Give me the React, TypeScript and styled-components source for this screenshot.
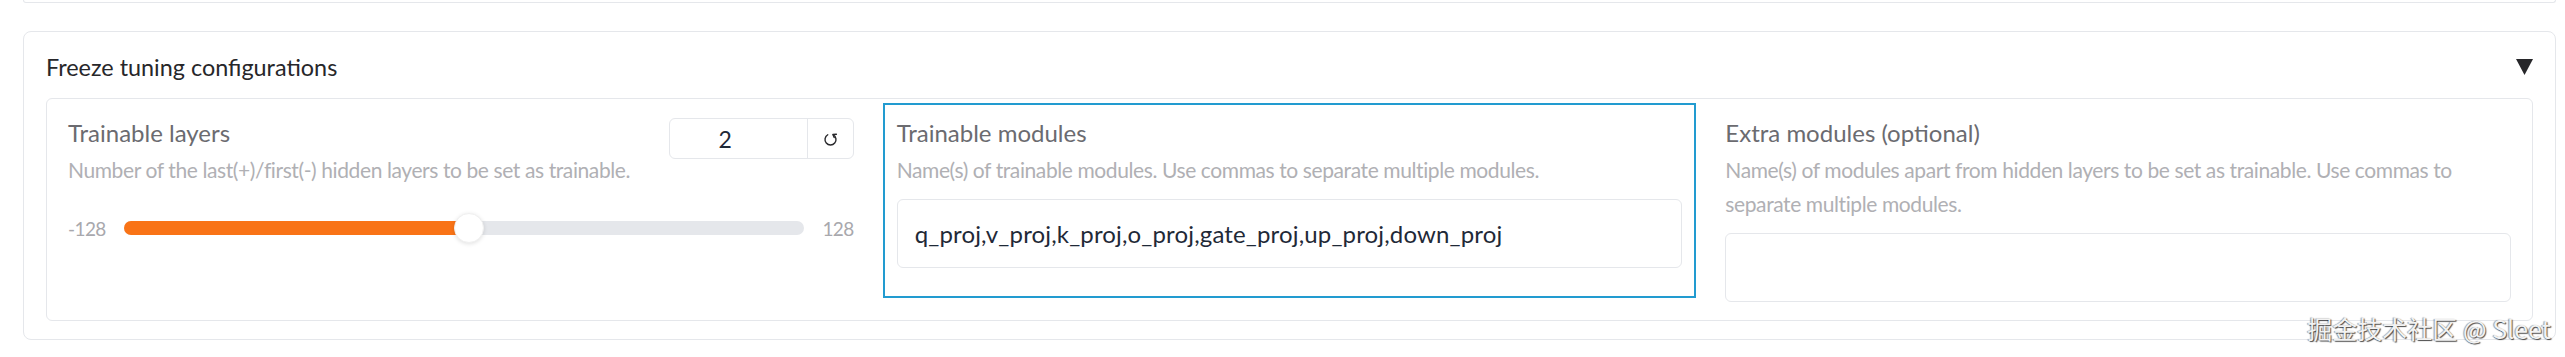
import React from "react";
import styled, { createGlobalStyle } from "styled-components";

const GlobalStyle = createGlobalStyle`
  html, body {
    margin: 0;
    padding: 0;
    background: #ffffff;
  }
  body {
    font-family: Lato, "Noto Sans", sans-serif;
  }
  * {
    box-sizing: border-box;
  }
`;

const SLIDER_MIN = -128;
const SLIDER_MAX = 128;
const SLIDER_VALUE = 2;

const App = () => {
  const pct = ((SLIDER_VALUE - SLIDER_MIN) / (SLIDER_MAX - SLIDER_MIN)) * 100;

  return (
    <>
      <GlobalStyle />
      <Page>
        <PrevPanel />
        <Accordion>
          <Header>
            <Title>Freeze tuning configurations</Title>
            <svg width="17" height="16" viewBox="0 0 17 16">
              <polygon points="0,0 17,0 8.5,16" fill="#27272a" />
            </svg>
          </Header>
          <Group>
            <Block>
              <BlockHead>
                <div>
                  <Label>Trainable layers</Label>
                  <Info>Number of the last(+)/first(-) hidden layers to be set as trainable.</Info>
                </div>
                <NumberField>
                  <NumberValue>{SLIDER_VALUE}</NumberValue>
                  <ResetButton title="↺">
                    <svg width="15" height="15" viewBox="0 0 15 15" fill="none" stroke="#27272a" strokeWidth="1.4" strokeLinecap="round" strokeLinejoin="round">
                      <path d="M4.75 3.74 A5.5 5.5 0 1 0 10.25 3.74" />
                      <path d="M13.4 3.2 L9.9 3.5 L11.2 6.6" />
                    </svg>
                  </ResetButton>
                </NumberField>
              </BlockHead>
              <SliderRow>
                <RangeText>{SLIDER_MIN}</RangeText>
                <Track>
                  <Fill style={{ width: `${pct}%` }} />
                  <Thumb style={{ left: `${pct}%` }} />
                </Track>
                <RangeText>{SLIDER_MAX}</RangeText>
              </SliderRow>
            </Block>

            <Block $focused $padBottom={28}>
              <Label>Trainable modules</Label>
              <Info>Name(s) of trainable modules. Use commas to separate multiple modules.</Info>
              <TextBox>q_proj,v_proj,k_proj,o_proj,gate_proj,up_proj,down_proj</TextBox>
            </Block>

            <Block>
              <Label>Extra modules (optional)</Label>
              <Info>
                Name(s) of modules apart from hidden layers to be set as trainable. Use commas to separate
                multiple modules.
              </Info>
              <TextBox />
            </Block>
          </Group>
        </Accordion>
        <Watermark>掘金技术社区 @ Sleet</Watermark>
      </Page>
    </>
  );
};
export default App;

const Page = styled.div`
  position: relative;
  width: 2565px;
  height: 357px;
  padding: 0 9px 0 23px;
  overflow: hidden;
`;

const PrevPanel = styled.div`
  height: 3px;
  border: 1px solid #e5e7eb;
  border-top: none;
  border-radius: 0 0 6px 6px;
`;

const Accordion = styled.div`
  margin-top: 28px;
  border: 1px solid #e5e7eb;
  border-radius: 8px;
  padding: 17px 22px 18px;
`;

const Header = styled.div`
  display: flex;
  align-items: center;
  justify-content: space-between;
  height: 36px;
  margin-bottom: 13px;
`;

const Title = styled.span`
  font-size: 23.4px;
  line-height: 36px;
  color: #27272a;
`;

const Group = styled.div`
  display: flex;
  align-items: flex-start;
  gap: 15px;
  border: 1px solid #e5e7eb;
  border-radius: 6px;
  padding: 4px 7px;
`;

const Block = styled.div<{ $focused?: boolean; $padBottom?: number }>`
  flex: 1 1 0;
  min-width: 0;
  border: 2px solid ${(p) => (p.$focused ? "#229bd0" : "transparent")};
  padding: 12px 12px ${(p) => p.$padBottom ?? 12}px;
`;

const BlockHead = styled.div`
  display: flex;
  align-items: flex-start;
  justify-content: space-between;
`;

const Label = styled.div`
  font-size: 24px;
  line-height: 32px;
  color: #6b6b70;
  margin-bottom: 4px;
`;

const Info = styled.div`
  font-size: 21px;
  letter-spacing: -0.4px;
  line-height: 34px;
  color: #b0b0b4;
`;

const NumberField = styled.div`
  display: flex;
  width: 185px;
  height: 41px;
  border: 1px solid #e5e7eb;
  border-radius: 6px;
  margin-top: 1px;
`;

const NumberValue = styled.div`
  width: 137px;
  padding-right: 26px;
  display: flex;
  align-items: center;
  justify-content: center;
  font-size: 23px;
  color: #1f2937;
`;

const ResetButton = styled.div`
  flex: 1;
  border-left: 1px solid #e5e7eb;
  display: flex;
  align-items: center;
  justify-content: center;
`;

const SliderRow = styled.div`
  display: flex;
  align-items: center;
  gap: 18px;
  height: 32px;
  margin-top: 25px;
`;

const RangeText = styled.span`
  font-size: 19px;
  letter-spacing: -0.6px;
  color: #a8a8ad;
`;

const Track = styled.div`
  position: relative;
  flex: 1;
  height: 14px;
  border-radius: 7px;
  background: #e5e7eb;
`;

const Fill = styled.div`
  height: 100%;
  border-radius: 7px;
  background: #f97316;
`;

const Thumb = styled.div`
  position: absolute;
  top: 50%;
  width: 30px;
  height: 30px;
  margin: -15px 0 0 -15px;
  border-radius: 50%;
  background: #ffffff;
  border: 1px solid #f0f0f0;
  box-shadow: 0 1px 4px rgba(0, 0, 0, 0.12);
`;

const TextBox = styled.div`
  margin-top: 12px;
  height: 69px;
  display: flex;
  align-items: center;
  padding: 0 17px;
  border: 1px solid #e5e7eb;
  border-radius: 6px;
  font-size: 24px;
  letter-spacing: 0.15px;
  color: #1f2937;
  white-space: nowrap;
`;

const Watermark = styled.div`
  position: absolute;
  top: 313px;
  right: 14px;
  font-family: "Noto Sans CJK SC", "Noto Sans", sans-serif;
  font-size: 25px;
  line-height: 30px;
  color: #f2f2f2;
  text-shadow: 1px 1px 1px rgba(0, 0, 0, 0.7), -1px 0 1px rgba(0, 0, 0, 0.4);
`;
